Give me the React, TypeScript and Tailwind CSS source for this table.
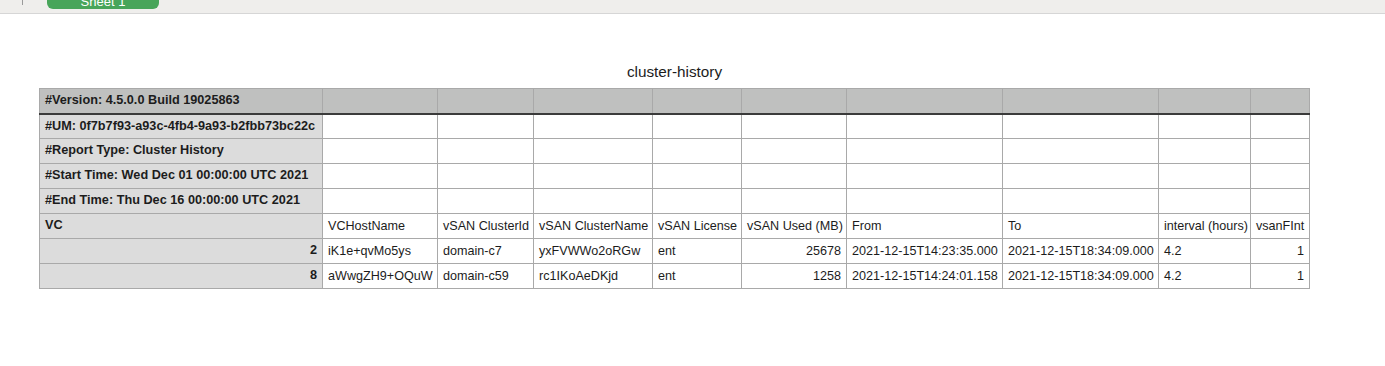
import React from 'react';

const widths = [283, 115, 96, 119, 89, 105, 156, 156, 92, 59];

const metaRows = [
  '#UM: 0f7b7f93-a93c-4fb4-9a93-b2fbb73bc22c',
  '#Report Type: Cluster History',
  '#Start Time: Wed Dec 01 00:00:00 UTC 2021',
  '#End Time: Thu Dec 16 00:00:00 UTC 2021',
];

const headers = [
  'VCHostName',
  'vSAN ClusterId',
  'vSAN ClusterName',
  'vSAN License',
  'vSAN Used (MB)',
  'From',
  'To',
  'interval (hours)',
  'vsanFInt',
];

const dataRows = [
  ['2', 'iK1e+qvMo5ys', 'domain-c7', 'yxFVWWo2oRGw', 'ent', '25678', '2021-12-15T14:23:35.000', '2021-12-15T18:34:09.000', '4.2', '1'],
  ['8', 'aWwgZH9+OQuW', 'domain-c59', 'rc1IKoAeDKjd', 'ent', '1258', '2021-12-15T14:24:01.158', '2021-12-15T18:34:09.000', '4.2', '1'],
];

const rightCols = [0, 5, 9];

const cell = 'h-[25px] border border-[#a9a9a9] px-[5px] whitespace-nowrap overflow-hidden text-[12.6px] text-[#1c1c1c]';
const firstCol = 'bg-[#dcdcdc] font-bold text-[12.7px]';

export default function App() {
  return (
    <div className="w-[1385px] h-[366px] bg-white overflow-hidden" style={{ fontFamily: '"Liberation Sans", Arial, sans-serif' }}>
      {/* sheet tab bar */}
      <div className="h-[14px] bg-[#efeeec] border-b border-[#d6d6d6] flex items-start">
        <div className="ml-[22px] w-px h-[5px] bg-[#9a9a9a]" />
        <div className="ml-[24px] w-[112px] h-[9px] bg-[#48a55a] rounded-b-[6px] flex items-end justify-center overflow-hidden">
          <span className="text-white text-[13px] leading-[13px] translate-y-[-1px]">Sheet 1</span>
        </div>
      </div>

      <div className="pl-[39px] pt-[48px]">
        <div className="w-[1271px] text-center text-[15.3px] leading-[20px] text-[#1c1c1c] mb-[6px]">cluster-history</div>

        <table className="table-fixed border-collapse" style={{ width: 1271 }}>
          <colgroup>
            {widths.map((w, i) => (
              <col key={i} style={{ width: w }} />
            ))}
          </colgroup>
          <tbody>
            <tr className="bg-[#bfc0bf]">
              <td className={`${cell} font-bold text-[12.7px] border-b-2 border-b-[#3b3b3b]`}>#Version: 4.5.0.0 Build 19025863</td>
              {widths.slice(1).map((_, i) => (
                <td key={i} className={`${cell} border-b-2 border-b-[#3b3b3b]`} />
              ))}
            </tr>
            {metaRows.map((label) => (
              <tr key={label}>
                <td className={`${cell} ${firstCol}`}>{label}</td>
                {widths.slice(1).map((_, i) => (
                  <td key={i} className={cell} />
                ))}
              </tr>
            ))}
            <tr>
              <td className={`${cell} ${firstCol}`}>VC</td>
              {headers.map((h) => (
                <td key={h} className={cell}>{h}</td>
              ))}
            </tr>
            {dataRows.map((row, r) => (
              <tr key={r}>
                {row.map((v, i) => (
                  <td
                    key={i}
                    className={`${cell} ${i === 0 ? firstCol : ''} ${rightCols.includes(i) ? 'text-right' : 'text-left'}`}
                  >
                    {v}
                  </td>
                ))}
              </tr>
            ))}
          </tbody>
        </table>
      </div>
    </div>
  );
}
